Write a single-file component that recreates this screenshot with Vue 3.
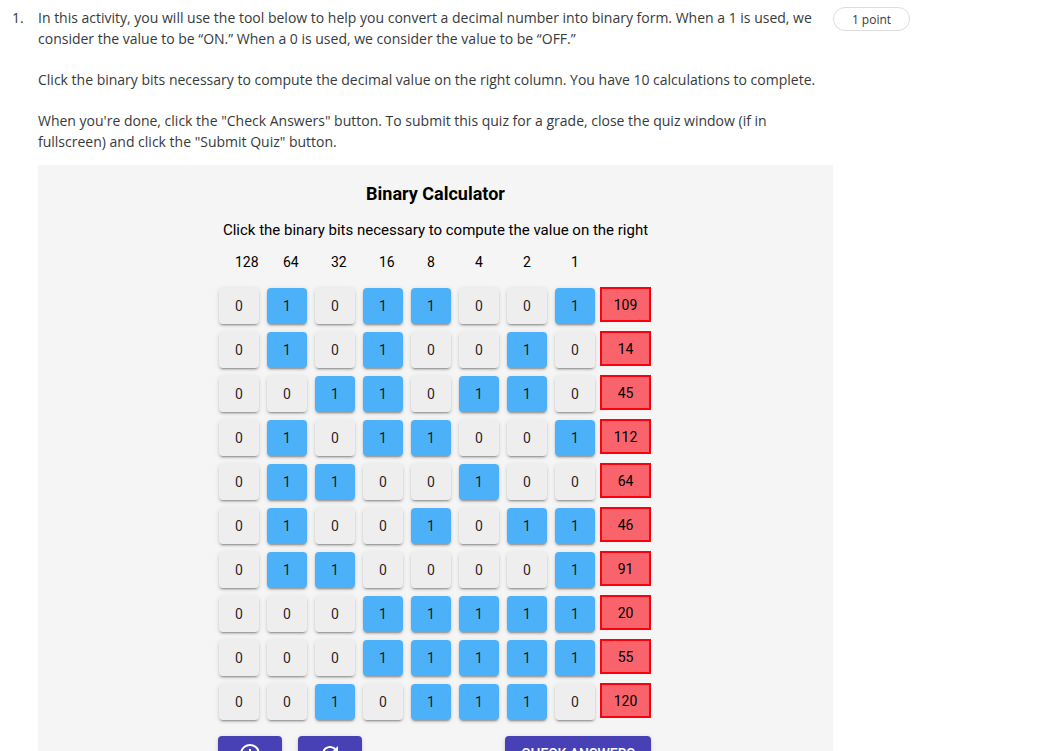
<script setup>
import { ref } from 'vue'

const places = [128, 64, 32, 16, 8, 4, 2, 1]

const rows = ref([
  { target: 109, bits: [0, 1, 0, 1, 1, 0, 0, 1] },
  { target: 14, bits: [0, 1, 0, 1, 0, 0, 1, 0] },
  { target: 45, bits: [0, 0, 1, 1, 0, 1, 1, 0] },
  { target: 112, bits: [0, 1, 0, 1, 1, 0, 0, 1] },
  { target: 64, bits: [0, 1, 1, 0, 0, 1, 0, 0] },
  { target: 46, bits: [0, 1, 0, 0, 1, 0, 1, 1] },
  { target: 91, bits: [0, 1, 1, 0, 0, 0, 0, 1] },
  { target: 20, bits: [0, 0, 0, 1, 1, 1, 1, 1] },
  { target: 55, bits: [0, 0, 0, 1, 1, 1, 1, 1] },
  { target: 120, bits: [0, 0, 1, 0, 1, 1, 1, 0] },
])

function toggle(row, index) {
  row.bits[index] = row.bits[index] ? 0 : 1
}

function reset() {
  rows.value.forEach((row) => row.bits.fill(0))
}
</script>

<template>
  <main class="question">
    <span class="number">1.</span>
    <div class="body">
      <div class="prompt">
        <p>In this activity, you will use the tool below to help you convert a decimal number into binary form. When a 1 is used, we consider the value to be “ON.” When a 0 is used, we consider the value to be “OFF.”</p>
        <p>Click the binary bits necessary to compute the decimal value on the right column. You have 10 calculations to complete.</p>
        <p>When you're done, click the "Check Answers" button. To submit this quiz for a grade, close the quiz window (if in fullscreen) and click the "Submit Quiz" button.</p>
      </div>
      <section class="calculator">
        <h1>Binary Calculator</h1>
        <p class="hint">Click the binary bits necessary to compute the value on the right</p>
        <div class="tool">
          <table>
            <thead>
              <tr>
                <th v-for="place in places" :key="place" scope="col">{{ place }}</th>
                <td></td>
              </tr>
            </thead>
            <tbody>
              <tr v-for="row in rows" :key="row.target">
                <td v-for="(bit, i) in row.bits" :key="i">
                  <button
                    type="button"
                    class="bit"
                    :class="{ on: bit }"
                    :aria-pressed="bit === 1"
                    @click="toggle(row, i)"
                  >{{ bit }}</button>
                </td>
                <td class="answer"><div class="target">{{ row.target }}</div></td>
              </tr>
            </tbody>
          </table>
          <div class="actions">
            <button type="button" class="action icon" aria-label="Information">
              <svg viewBox="0 0 24 24" width="24" height="24" fill="currentColor" aria-hidden="true">
                <path d="M11 7h2v2h-2zm0 4h2v6h-2zm1-9C6.480 2 2 6.480 2 12s4.480 10 10 10 10-4.480 10-10S17.520 2 12 2zm0 18c-4.410 0-8-3.590-8-8s3.590-8 8-8 8 3.590 8 8-3.590 8-8 8z" />
              </svg>
            </button>
            <button type="button" class="action icon" aria-label="Reset" @click="reset">
              <svg viewBox="0 0 24 24" width="24" height="24" fill="currentColor" aria-hidden="true">
                <path d="M17.650 6.350C16.200 4.900 14.210 4 12 4c-4.420 0-7.990 3.580-7.990 8s3.570 8 7.990 8c3.730 0 6.840-2.550 7.730-6h-2.080c-.82 2.330-3.040 4-5.650 4-3.310 0-6-2.690-6-6s2.690-6 6-6c1.660 0 3.140.69 4.220 1.780L13 11h7V4l-2.350 2.350z" />
              </svg>
            </button>
            <button type="button" class="action check">CHECK ANSWERS</button>
          </div>
        </div>
      </section>
    </div>
    <div class="points">1 point</div>
  </main>
</template>

<style>
html,
body {
  background: #fff;
}

body::-webkit-scrollbar {
  display: none;
}
</style>

<style scoped>
.question {
  display: grid;
  grid-template-columns: 26px minmax(0, 795px) auto;
  justify-content: start;
  align-items: start;
  padding: 7px 12px 0;
  color: #373a3c;
  font-family: "Open Sans", sans-serif;
  font-size: 14px;
  line-height: 21px;
}

.prompt {
  display: flex;
  flex-direction: column;
  gap: 20px;
  padding-right: 12px;
}

.prompt p {
  margin: 0;
}

.points {
  box-sizing: border-box;
  min-width: 77px;
  padding: 1px 16px 0;
  border: 1px solid #ddd;
  border-radius: 12px;
  font-size: 12px;
  line-height: 21px;
  text-align: center;
}

.calculator {
  display: flex;
  flex-direction: column;
  align-items: center;
  margin-top: 13px;
  padding: 16px 16px 40px;
  background: #f5f5f5;
  color: #000;
  font-family: Roboto, sans-serif;
}

h1 {
  margin: 0;
  font-size: 18px;
  font-weight: 700;
  line-height: 26px;
}

.hint {
  margin: 12px 0 11px;
  font-size: 15px;
  line-height: 22px;
}

.tool {
  width: 433px;
  padding-right: 2px;
}

table {
  width: 100%;
  border-collapse: collapse;
  table-layout: fixed;
}

th,
td {
  box-sizing: border-box;
  vertical-align: top;
  font-size: 14px;
}

th {
  width: 48px;
  padding: 0 0 15px 17px;
  font-weight: 400;
  line-height: 20px;
  text-align: left;
}

th:last-of-type {
  width: 46px;
}

td {
  padding: 1px 0 7px 1px;
}

.answer {
  padding: 0;
}

.bit {
  display: block;
  width: 40px;
  height: 36px;
  padding: 0;
  border: 0;
  border-radius: 4px;
  background: #eee;
  color: rgba(0, 0, 0, 0.87);
  box-shadow: 0 3px 1px -2px rgba(0, 0, 0, 0.2), 0 2px 2px rgba(0, 0, 0, 0.14), 0 1px 5px rgba(0, 0, 0, 0.12);
  font: 400 14px/36px Roboto, sans-serif;
}

.bit.on {
  background: #4db1f9;
}

.target {
  box-sizing: border-box;
  height: 35px;
  border: 2px solid #fb000d;
  background: #f9646c;
  line-height: 32px;
  text-align: center;
}

.actions {
  display: flex;
  gap: 16px;
  margin-top: 9px;
}

.action {
  display: flex;
  align-items: center;
  justify-content: center;
  height: 36px;
  padding: 0 16px;
  border: 0;
  border-radius: 4px;
  background: #4840b5;
  color: #fff;
  box-shadow: 0 3px 1px -2px rgba(0, 0, 0, 0.2), 0 2px 2px rgba(0, 0, 0, 0.14), 0 1px 5px rgba(0, 0, 0, 0.12);
  font: 500 14px/36px Roboto, sans-serif;
}

.icon {
  width: 64px;
}

.check {
  margin-left: auto;
}
</style>
